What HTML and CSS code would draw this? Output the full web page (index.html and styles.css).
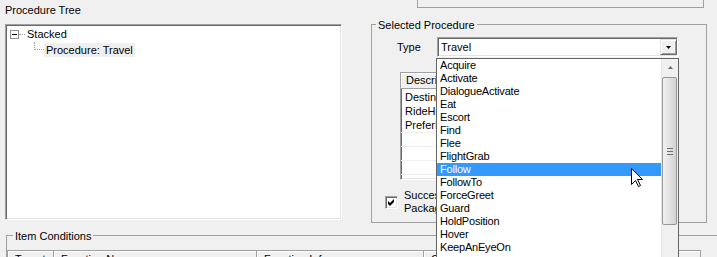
FILE: index.html
```html
<!DOCTYPE html>
<html lang="en">
<head>
  <meta charset="UTF-8" />
  <title>Procedure Editor</title>
  <link rel="stylesheet" href="styles.css">
</head>
<body>
  <div class="top">
    <div class="tree-panel">
      <div class="caption">Procedure Tree</div>
      <div class="tree">
        <div class="tree-row">
          <span class="expander"></span>
          <span class="branch"></span>
          <span class="node">Stacked</span>
        </div>
        <div class="tree-row">
          <span class="child-line"></span>
          <span class="node selected">Procedure: Travel</span>
        </div>
      </div>
    </div>

    <div class="proc-panel">
      <div class="top-box"></div>
      <div class="group selected-proc">
        <div class="group-title">Selected Procedure</div>
        <div class="type-row">
          <span class="type-label">Type</span>
          <div class="combo">
            <span>Travel</span>
            <span class="combo-btn">
              <svg width="5" height="3" viewBox="0 0 5 3"><polygon points="0,0 5,0 2.5,3" fill="#000"/></svg>
            </span>
          </div>
        </div>
        <div class="listview params">
          <div class="lv-header">
            <span class="hd-cell desc">Description</span>
            <span class="hd-cell">Value</span>
          </div>
          <div class="lv-body">
            <div class="lv-row">Destination</div>
            <div class="lv-row">RideHorse</div>
            <div class="lv-row">PreferPathing</div>
            <div class="lv-row empty"></div>
            <div class="lv-row empty"></div>
            <div class="lv-row empty"></div>
            <div class="lv-row empty"></div>
          </div>
        </div>
        <div class="check-row">
          <span class="checkbox">
            <svg width="11" height="11" viewBox="0 0 11 11"><path d="M2 4 L4 6 L8 2 L8 5 L4 9 L2 7 Z" fill="#000"/></svg>
          </span>
          <span>Success Completes<br>Package</span>
        </div>
      </div>
    </div>
  </div>

  <div class="group item-conditions">
    <div class="group-title">Item Conditions</div>
    <div class="conditions">
      <span class="hd-cell col-target">Target</span>
      <span class="hd-cell col-func">Function Name</span>
      <span class="hd-cell col-info">Function Info</span>
      <span class="hd-cell col-cond">Comparison</span>
    </div>
  </div>

  <div class="dropdown">
    <ul class="dd-items">
      <li>Acquire</li>
      <li>Activate</li>
      <li>DialogueActivate</li>
      <li>Eat</li>
      <li>Escort</li>
      <li>Find</li>
      <li>Flee</li>
      <li>FlightGrab</li>
      <li class="hot">Follow</li>
      <li>FollowTo</li>
      <li>ForceGreet</li>
      <li>Guard</li>
      <li>HoldPosition</li>
      <li>Hover</li>
      <li>KeepAnEyeOn</li>
    </ul>
    <div class="dd-scroll">
      <div class="sb-up">
        <svg width="5" height="3" viewBox="0 0 5 3"><polygon points="2.5,0 5,3 0,3" fill="#6a6a6a"/></svg>
      </div>
      <div class="sb-thumb">
        <svg width="6" height="7" viewBox="0 0 6 7">
          <rect x="0" y="0" width="6" height="1" fill="#6e6e6e"/>
          <rect x="0" y="3" width="6" height="1" fill="#6e6e6e"/>
          <rect x="0" y="6" width="6" height="1" fill="#6e6e6e"/>
        </svg>
      </div>
    </div>
  </div>

  <svg class="cursor" width="13" height="20" viewBox="0 0 13 20">
    <path d="M0.5 0.5 V16.5 L4.5 12.5 L7.5 18.5 L9.5 17.5 L6.5 11.5 H11.5 Z" fill="#fff" stroke="#000" stroke-width="1"/>
  </svg>
</body>
</html>
```

FILE: styles.css
```css
body {
  margin: 0;
  width: 717px;
  height: 257px;
  overflow: hidden;
  position: relative;
  background: #f0f0f0;
  font-family: "Liberation Sans", Arial, sans-serif;
  font-size: 11px;
  color: #000;
}
.top { display: flex; height: 223px; }

/* procedure tree */
.tree-panel { margin-left: 5px; padding-top: 4px; }
.caption { line-height: 13px; margin-bottom: 7px; }
.tree {
  width: 337px;
  height: 196px;
  box-sizing: border-box;
  padding: 1px 0 0 4px;
  background: #fff;
  border: 1px solid;
  border-color: #a0a0a0 #fff #fff #a0a0a0;
  box-shadow: inset 1px 1px 0 #696969, inset -1px -1px 0 #e3e3e3;
}
.tree-row { display: flex; align-items: flex-start; height: 16px; line-height: 16px; }
.expander {
  width: 9px;
  height: 9px;
  box-sizing: border-box;
  margin-top: 4px;
  border: 1px solid #919191;
  background: linear-gradient(#000, #000) center / 5px 1px no-repeat, #fff;
}
.branch { width: 6px; margin: 8px 2px 0 0; border-top: 1px dotted #a0a0a0; }
.child-line {
  width: 9px;
  height: 7px;
  margin-left: 24px;
  border-left: 1px dotted #a0a0a0;
  border-bottom: 1px dotted #a0a0a0;
}
.node.selected { margin-top: 1px; padding: 0 2px; line-height: 14px; background: #efefef; }

/* group boxes */
.group { border: 1px solid #a0a0a0; box-sizing: border-box; }
.group-title {
  width: fit-content;
  margin: -6px 0 0 4px;
  padding: 0 2px;
  line-height: 13px;
  background: #f0f0f0;
}

.proc-panel { margin-left: 29px; width: 336px; }
.top-box {
  margin-left: 46px;
  width: 287px;
  height: 8px;
  box-sizing: border-box;
  border: 1px solid #a0a0a0;
  border-top: none;
}
.selected-proc { margin-top: 16px; height: 199px; }

.type-row { display: flex; align-items: center; margin-top: 5px; height: 20px; }
.type-label { width: 40px; margin-left: 25px; }
.combo {
  display: flex;
  align-items: center;
  justify-content: space-between;
  width: 241px;
  height: 20px;
  box-sizing: border-box;
  padding-left: 3px;
  background: #fff;
  border: 1px solid;
  border-color: #a0a0a0 #fff #fff #a0a0a0;
  box-shadow: inset 1px 1px 0 #696969, inset -1px -1px 0 #e3e3e3;
}
.combo-btn {
  display: flex;
  align-items: center;
  justify-content: center;
  width: 17px;
  height: 16px;
  box-sizing: border-box;
  background: #f0f0f0;
  border: 1px solid;
  border-color: #e3e3e3 #696969 #696969 #e3e3e3;
  box-shadow: inset 1px 1px 0 #fff, inset -1px -1px 0 #a0a0a0;
}

/* list views */
.listview {
  background: #fff;
  box-sizing: border-box;
  border: 1px solid;
  border-color: #a0a0a0 #fff #fff #a0a0a0;
  box-shadow: inset 1px 1px 0 #696969, inset -1px -1px 0 #e3e3e3;
  overflow: hidden;
}
.params { margin: 15px 0 0 28px; width: 270px; height: 108px; }
.lv-header { display: flex; }
.hd-cell {
  height: 16px;
  box-sizing: border-box;
  padding-left: 5px;
  line-height: 14px;
  background: #f0f0f0;
  border-right: 1px solid #a0a0a0;
  border-bottom: 1px solid #a0a0a0;
  box-shadow: inset 1px 1px 0 #fff;
  white-space: nowrap;
}
.params .hd-cell { width: 120px; }
.lv-body { padding-top: 1px; }
.lv-row { height: 14px; box-sizing: border-box; padding-left: 4px; line-height: 14px; }
.lv-row.empty { border-top: 1px solid #f0f0f0; }

.check-row { display: flex; align-items: center; margin: 9px 0 0 13px; line-height: 13px; }
.checkbox {
  width: 13px;
  height: 13px;
  box-sizing: border-box;
  margin-right: 6px;
  background: #fff;
  border: 1px solid;
  border-color: #a0a0a0 #fff #fff #a0a0a0;
  box-shadow: inset 1px 1px 0 #696969, inset -1px -1px 0 #e3e3e3;
}
.checkbox svg { display: block; }

/* item conditions */
.item-conditions { margin: 12px 0 0 6px; width: 730px; height: 40px; }
.item-conditions .group-title { margin-left: 6px; }
.conditions {
  display: flex;
  margin-top: 7px;
  width: 693px;
  height: 20px;
  border-top: 1px solid #a0a0a0;
  border-left: 1px solid #a0a0a0;
}
.conditions .hd-cell { height: 20px; padding: 1px 0 0 7px; }
.col-target { width: 46px; }
.col-func { width: 203px; }
.col-info { width: 167px; }
.col-cond { flex: 1; }

/* open combo list */
.dropdown {
  position: absolute;
  left: 436px;
  top: 58px;
  width: 243px;
  height: 210px;
  display: flex;
  background: #fff;
  border: 1px solid #646464;
  box-sizing: border-box;
}
.dd-items { flex: 1; margin: 0; padding: 0; list-style: none; letter-spacing: -0.2px; }
.dd-items li { height: 13px; line-height: 13px; padding-left: 3px; white-space: nowrap; }
.dd-items li.hot { background: #3399ff; color: #fff; }
.dd-scroll { width: 17px; background: #f0f0f0; border-left: 1px solid #e6e6e6; box-sizing: border-box; }
.sb-up { height: 17px; display: flex; align-items: center; justify-content: center; }
.sb-thumb {
  height: 148px;
  margin: 1px 1px 0 0;
  box-sizing: border-box;
  display: flex;
  align-items: center;
  justify-content: center;
  border: 1px solid #979797;
  border-radius: 2px;
  background: linear-gradient(to right, #f2f2f2, #e2e2e2 50%, #d3d3d3);
}
.cursor { position: absolute; left: 631px; top: 168px; }
```
